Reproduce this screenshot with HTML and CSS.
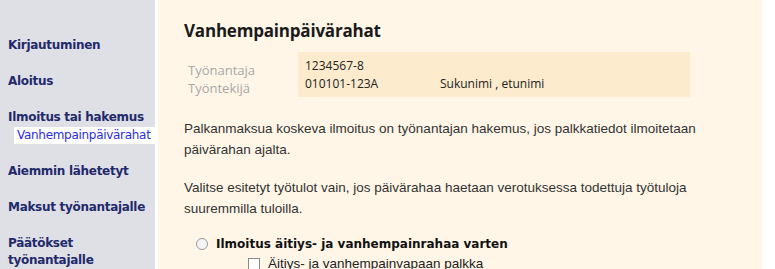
FILE: index.html
```html
<!DOCTYPE html>
<html lang="fi">
<head>
    <meta name="viewport" content="width=device-width, initial-scale=1.0">
    <link rel="stylesheet" href="styles.css">
    <title>Vanhempainpäivärahat</title>
</head>

<body>
    <div class="page">
        <nav class="sidebar">
            <a class="nav-item" href="#">Kirjautuminen</a>
            <a class="nav-item" href="#">Aloitus</a>
            <a class="nav-item nav-parent" href="#">Ilmoitus tai hakemus</a>
            <a class="nav-sub" href="#">Vanhempainpäivärahat</a>
            <a class="nav-item" href="#">Aiemmin lähetetyt</a>
            <a class="nav-item" href="#">Maksut työnantajalle</a>
            <a class="nav-item" href="#">Päätökset<br>työnantajalle</a>
        </nav>

        <main class="content">
            <h1>Vanhempainpäivärahat</h1>

            <div class="info">
                <div class="info-labels">
                    <span>Työnantaja</span>
                    <span>Työntekijä</span>
                </div>
                <div class="info-box">
                    <div class="info-row"><span class="col-id">1234567-8</span></div>
                    <div class="info-row"><span class="col-id">010101-123A</span><span>Sukunimi , etunimi</span></div>
                </div>
            </div>

            <p>Palkanmaksua koskeva ilmoitus on työnantajan hakemus, jos palkkatiedot ilmoitetaan päivärahan ajalta.</p>
            <p>Valitse esitetyt työtulot vain, jos päivärahaa haetaan verotuksessa todettuja työtuloja suuremmilla tuloilla.</p>

            <div class="choice">
                <label class="radio-row"><span class="radio"></span>Ilmoitus äitiys- ja vanhempainrahaa varten</label>
                <label class="check-row"><span class="check"></span>Äitiys- ja vanhempainvapaan palkka</label>
            </div>
        </main>
    </div>
</body>

</html>
```

FILE: styles.css
```css
body {
    margin: 0;
    padding: 0;
    background-color: #ffffff;
    font-family: "Liberation Sans", Arial, sans-serif;
    overflow: hidden;
}

.page {
    display: flex;
    width: 762px;
    height: 269px;
}

.sidebar {
    width: 155px;
    flex-shrink: 0;
    background-color: #dfdfe6;
    padding-top: 37px;
    display: flex;
    flex-direction: column;
    margin-right: 3px;
}

.nav-item {
    font-family: "DejaVu Sans", Verdana, sans-serif;
    font-weight: bold;
    font-size: 12px;
    letter-spacing: -0.3px;
    color: #1f2a6b;
    text-decoration: none;
    padding-left: 8px;
    line-height: 17px;
    margin-bottom: 19px;
}

.nav-parent {
    margin-bottom: 1px;
}

.nav-sub {
    font-family: "DejaVu Sans", Verdana, sans-serif;
    font-size: 12px;
    letter-spacing: -0.3px;
    color: #2b2ee0;
    background-color: #ffffff;
    text-decoration: none;
    margin-left: 14px;
    padding-left: 3px;
    line-height: 17px;
    margin-bottom: 19px;
}

.content {
    flex: 1;
    background-color: #fff6e7;
    padding: 19px 0 0 26px;
    color: #333333;
}

h1 {
    font-family: "Open Sans", sans-serif;
    font-size: 17px;
    font-weight: bold;
    color: #1a1a1a;
    margin: 0 0 10px 0;
    letter-spacing: -0.2px;
}

.info {
    display: flex;
    font-family: "Open Sans", sans-serif;
    font-size: 12px;
    margin-bottom: 21px;
}

.info-labels {
    width: 110px;
    padding: 9px 0 0 4px;
    display: flex;
    flex-direction: column;
    color: #a8a8a8;
    line-height: 18px;
    font-size: 13px;
}

.info-box {
    width: 392px;
    height: 45px;
    background-color: #fdebcd;
    padding: 5px 0 0 7px;
    box-sizing: border-box;
    color: #222222;
    line-height: 18px;
}

.col-id {
    display: inline-block;
    width: 135px;
}

p {
    font-size: 13.5px;
    line-height: 21px;
    margin: 0 0 17px 0;
    width: 520px;
}

.choice {
    margin-top: 17px;
    font-size: 13.5px;
}

.radio-row {
    display: flex;
    align-items: center;
    font-family: "DejaVu Sans", Verdana, sans-serif;
    font-weight: bold;
    font-size: 12px;
    color: #111111;
    margin-left: 12px;
    line-height: 16px;
}

.radio {
    width: 10px;
    height: 10px;
    border: 1px solid #9a9a9a;
    border-radius: 50%;
    background-color: #f4f4f4;
    margin-right: 8px;
}

.check-row {
    display: flex;
    align-items: center;
    color: #222222;
    margin: 4px 0 0 64px;
    line-height: 16px;
}

.check {
    width: 10px;
    height: 10px;
    border: 1px solid #8a8a8a;
    background-color: #fdfdfd;
    margin-right: 8px;
}
```
